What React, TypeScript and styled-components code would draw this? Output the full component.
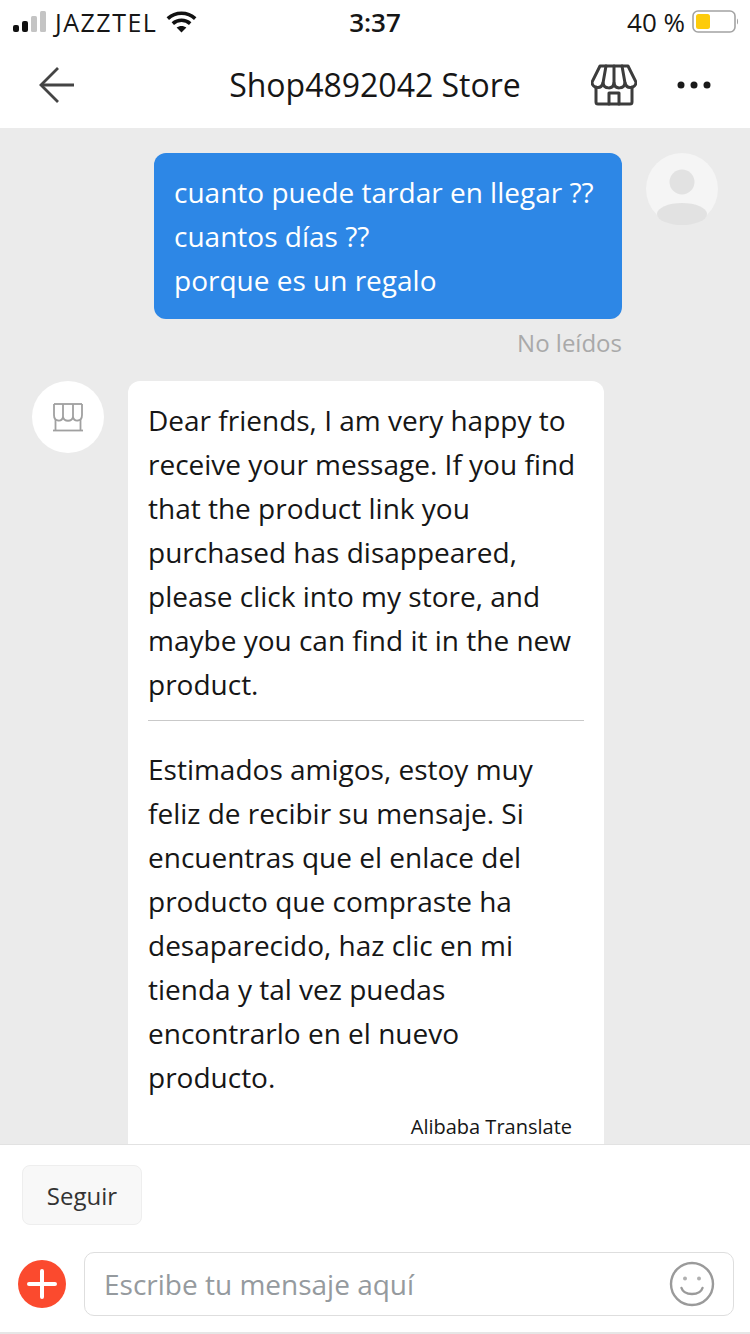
import React from "react";
import styled, { createGlobalStyle } from "styled-components";

const Global = createGlobalStyle`
  html, body { margin: 0; padding: 0; background: #fff; }
  * { box-sizing: border-box; }
`;

const Page = styled.div`
  width: 750px;
  height: 1334px;
  display: flex;
  flex-direction: column;
  overflow: hidden;
  background: #fff;
  font-family: "Open Sans", "Liberation Sans", sans-serif;
  color: #161616;
`;

const StatusBar = styled.div`
  height: 44px;
  flex: none;
  display: grid;
  grid-template-columns: 1fr auto 1fr;
  align-items: center;
  padding: 0 11px 1px 13px;
  font-size: 25px;
  line-height: 44px;
`;

const StatusLeft = styled.div`
  display: flex;
  align-items: center;
  gap: 9px;
`;

const Carrier = styled.span`
  letter-spacing: 1.5px;
  margin-right: 0;
`;

const Clock = styled.span`
  font-size: 26px;
  font-weight: 600;
  margin-left: -2px;
`;

const StatusRight = styled.div`
  display: flex;
  align-items: center;
  justify-content: flex-end;
  gap: 7px;
  font-size: 26px;
`;

const NavBar = styled.div`
  height: 84px;
  flex: none;
  display: grid;
  grid-template-columns: 1fr auto 1fr;
  align-items: center;
  padding: 0 39px 2px 39px;
`;

const NavTitle = styled.div`
  text-align: center;
  font-size: 32px;
  line-height: 40px;
  white-space: nowrap;
`;

const NavActions = styled.div`
  display: flex;
  align-items: center;
  justify-content: flex-end;
  gap: 40px;
`;

const Chat = styled.div`
  flex: 1;
  min-height: 0;
  overflow: hidden;
  background: #ebebeb;
  padding-top: 25px;
`;

const SentRow = styled.div`
  display: flex;
  justify-content: flex-end;
  gap: 24px;
  padding-right: 32px;
`;

const Avatar = styled.div`
  width: 72px;
  height: 72px;
  flex: none;
  border-radius: 50%;
  background: ${(p: { $tone: string }) => p.$tone};
  display: flex;
  align-items: center;
  justify-content: center;
`;

const SentBubble = styled.div`
  width: 468px;
  padding: 17px 20px;
  background: #2d87e6;
  border-radius: 12px;
  color: #fff;
  font-size: 28px;
  line-height: 44px;
  white-space: nowrap;
`;

const ReadState = styled.div`
  padding-right: 128px;
  margin-top: 7px;
  text-align: right;
  font-size: 24px;
  line-height: 34px;
  color: #a9a9a9;
`;

const ReceivedRow = styled.div`
  display: flex;
  gap: 24px;
  padding-left: 32px;
  margin-top: 21px;
`;

const ReceivedBubble = styled.div`
  width: 476px;
  padding: 17px 20px 20px;
  background: #fff;
  border-radius: 12px 12px 0 0;
  font-size: 28px;
  line-height: 44px;
  white-space: nowrap;
`;

const Divider = styled.div`
  height: 1px;
  background: #c9c9c9;
  margin: 14px 0 26px;
`;

const Credit = styled.div`
  text-align: right;
  font-size: 20px;
  line-height: 28px;
  margin-top: 14px;
  padding-right: 12px;
`;

const Footer = styled.div`
  height: 190px;
  flex: none;
  border-top: 1px solid #e2e2e2;
  border-bottom: 2px solid #e6e6e6;
  display: flex;
  flex-direction: column;
  padding: 20px 16px 0 18px;
`;

const FollowButton = styled.div`
  width: 120px;
  height: 60px;
  margin-left: 4px;
  border: 1px solid #eeeeee;
  border-radius: 8px;
  background: #f8f8f8;
  display: flex;
  align-items: center;
  justify-content: center;
  font-size: 24px;
  color: #333;
`;

const InputRow = styled.div`
  display: flex;
  align-items: center;
  gap: 18px;
  margin-top: 27px;
`;

const InputBox = styled.div`
  flex: 1;
  height: 64px;
  border: 1px solid #dedede;
  border-radius: 10px;
  display: flex;
  align-items: center;
  justify-content: space-between;
  padding: 0 18px 0 19px;
  font-size: 28px;
  color: #959a9e;
`;

const Signal = () => (
  <svg width="33" height="22" viewBox="0 0 33 22">
    <rect x="0" y="14" width="6" height="7" rx="2" fill="#111" />
    <rect x="9" y="10" width="6" height="11" rx="2" fill="#111" />
    <rect x="18" y="5" width="6" height="16" rx="1.5" fill="#c4c4c4" />
    <rect x="27" y="0" width="6" height="21" rx="1.5" fill="#c4c4c4" />
  </svg>
);

const Wifi = () => (
  <svg width="31" height="22" viewBox="0 0 31 22" fill="none" stroke="#111" strokeWidth="3.6">
    <path d="M1.8 7.6C9.6 0.4 21.4 0.4 29.2 7.6" />
    <path d="M6.8 12.6C11.8 8.2 19.2 8.2 24.2 12.6" />
    <path d="M15.5 21.4 L10.6 16.6 C13.4 14.4 17.6 14.4 20.4 16.6 Z" fill="#111" stroke="none" />
  </svg>
);

const Battery = () => (
  <svg width="47" height="24" viewBox="0 0 47 24">
    <rect x="1" y="1" width="42" height="21" rx="5" fill="#fff" stroke="#a3a3a3" strokeWidth="1.6" />
    <rect x="4" y="4" width="14" height="15" rx="2.5" fill="#fdcb0b" />
    <path d="M45 8.5c1.4.6 1.4 5.400 0 6z" fill="#a3a3a3" />
  </svg>
);

const BackIcon = () => (
  <svg width="36" height="36" viewBox="0 0 36 36" fill="none" stroke="#444" strokeWidth="2.8">
    <path d="M35 18H2" />
    <path d="M19 1 L2 18 L19 35" />
  </svg>
);

const StoreIcon = () => (
  <svg width="46" height="42" viewBox="0 0 46 42" fill="none" stroke="#3c3c3c" strokeWidth="3" strokeLinejoin="round" strokeLinecap="round">
    <path d="M9 2H37L45 18C45 24 36 26 34 19C33 25 24 26 23 19C22 26 13 25 12 19C10 26 1 24 1 18Z" />
    <path d="M15 2L12 19M23 2V19M31 2L34 19" />
    <path d="M5 23V38C5 39.500 6 40 7 40H39C40 40 41 39.500 41 38V23" />
    <path d="M18 40V29H28V40" />
  </svg>
);

const MoreIcon = () => (
  <svg width="34" height="8" viewBox="0 0 34 8" fill="#1a1a1a">
    <circle cx="4" cy="4" r="3.500" />
    <circle cx="17" cy="4" r="3.500" />
    <circle cx="30" cy="4" r="3.500" />
  </svg>
);

const PersonIcon = () => (
  <svg width="72" height="72" viewBox="0 0 72 72" fill="#e2e2e2">
    <circle cx="36" cy="29" r="12.500" />
    <ellipse cx="36" cy="61" rx="25" ry="11" />
  </svg>
);

const SmallStoreIcon = () => (
  <svg width="32" height="32" viewBox="0 0 32 32" fill="none" stroke="#a0a0a0" strokeWidth="1.800">
    <path d="M2 3H30" />
    <path d="M2 3V14C2 21 10 21 11 16C12 21 20 21 21 16C22 21 30 21 30 14V3" />
    <path d="M11 3V16M21 3V16" />
    <path d="M3.500 18V29M28.500 18V29" />
    <path d="M1 29.500H31" />
  </svg>
);

const PlusIcon = () => (
  <svg width="48" height="48" viewBox="0 0 48 48">
    <circle cx="24" cy="24" r="24" fill="#fb4a2e" />
    <path d="M11 24H37M24 11V37" stroke="#fff" strokeWidth="4" strokeLinecap="round" />
  </svg>
);

const SmileIcon = () => (
  <svg width="46" height="46" viewBox="0 0 46 46" fill="none" stroke="#9a9a9a" strokeWidth="2.400">
    <circle cx="23" cy="23" r="21" />
    <circle cx="16" cy="17.500" r="2" fill="#b0b0b0" stroke="none" />
    <circle cx="30" cy="17.500" r="2" fill="#b0b0b0" stroke="none" />
    <path d="M12.500 27C15 35 31 35 33.500 27" strokeLinecap="round" />
  </svg>
);

const Lines = ({ lines }: { lines: string[] }) => (
  <>
    {lines.map((line) => (
      <div key={line}>{line}</div>
    ))}
  </>
);

export default function App() {
  return (
    <Page>
      <Global />
      <StatusBar>
        <StatusLeft>
          <Signal />
          <Carrier>JAZZTEL</Carrier>
          <Wifi />
        </StatusLeft>
        <Clock>3:37</Clock>
        <StatusRight>
          <span>40 %</span>
          <Battery />
        </StatusRight>
      </StatusBar>
      <NavBar>
        <BackIcon />
        <NavTitle>Shop4892042 Store</NavTitle>
        <NavActions>
          <StoreIcon />
          <MoreIcon />
        </NavActions>
      </NavBar>
      <Chat>
        <SentRow>
          <SentBubble>
            <Lines lines={["cuanto puede tardar en llegar ??", "cuantos días ??", "porque es un regalo"]} />
          </SentBubble>
          <Avatar $tone="#f5f5f5">
            <PersonIcon />
          </Avatar>
        </SentRow>
        <ReadState>No leídos</ReadState>
        <ReceivedRow>
          <Avatar $tone="#ffffff">
            <SmallStoreIcon />
          </Avatar>
          <ReceivedBubble>
            <Lines
              lines={[
                "Dear friends, I am very happy to",
                "receive your message. If you find",
                "that the product link you",
                "purchased has disappeared,",
                "please click into my store, and",
                "maybe you can find it in the new",
                "product.",
              ]}
            />
            <Divider />
            <Lines
              lines={[
                "Estimados amigos, estoy muy",
                "feliz de recibir su mensaje. Si",
                "encuentras que el enlace del",
                "producto que compraste ha",
                "desaparecido, haz clic en mi",
                "tienda y tal vez puedas",
                "encontrarlo en el nuevo",
                "producto.",
              ]}
            />
            <Credit>Alibaba Translate</Credit>
          </ReceivedBubble>
        </ReceivedRow>
      </Chat>
      <Footer>
        <FollowButton>Seguir</FollowButton>
        <InputRow>
          <PlusIcon />
          <InputBox>
            <span>Escribe tu mensaje aquí</span>
            <SmileIcon />
          </InputBox>
        </InputRow>
      </Footer>
    </Page>
  );
}
